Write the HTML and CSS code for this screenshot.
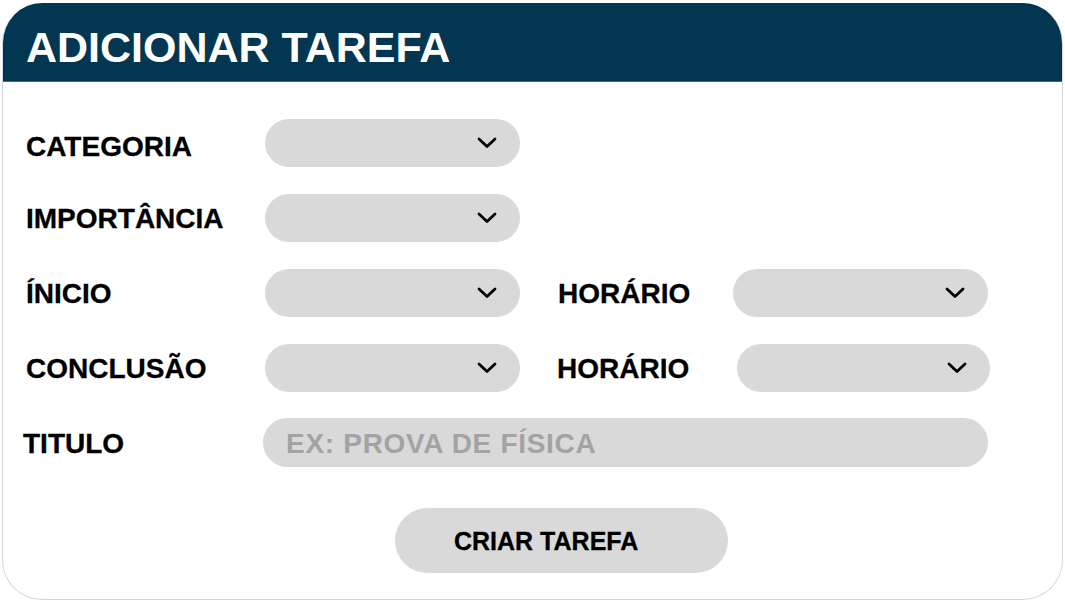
FILE: index.html
```html
<!DOCTYPE html>
<html lang="pt-BR">
<head>
<meta charset="utf-8">
<title>Adicionar Tarefa</title>
<link rel="stylesheet" href="styles.css">
</head>
<body>
<div class="card">
  <div class="header">ADICIONAR TAREFA</div>
  <form class="form">
    <div class="grid">
      <label class="label label-first">CATEGORIA</label>
      <div class="select"><svg class="chev" viewBox="0 0 20 12" width="20" height="12"><polyline points="2,2 10,9.5 18,2"/></svg></div>
      <span class="empty"></span>

      <label class="label">IMPORTÂNCIA</label>
      <div class="select"><svg class="chev" viewBox="0 0 20 12" width="20" height="12"><polyline points="2,2 10,9.5 18,2"/></svg></div>
      <span class="empty"></span>

      <label class="label">ÍNICIO</label>
      <div class="select"><svg class="chev" viewBox="0 0 20 12" width="20" height="12"><polyline points="2,2 10,9.5 18,2"/></svg></div>
      <label class="label label2">HORÁRIO</label>
      <div class="select"><svg class="chev" viewBox="0 0 20 12" width="20" height="12"><polyline points="2,2 10,9.5 18,2"/></svg></div>

      <label class="label">CONCLUSÃO</label>
      <div class="select"><svg class="chev" viewBox="0 0 20 12" width="20" height="12"><polyline points="2,2 10,9.5 18,2"/></svg></div>
      <label class="label label2 label2-shift">HORÁRIO</label>
      <div class="select select-shift"><svg class="chev" viewBox="0 0 20 12" width="20" height="12"><polyline points="2,2 10,9.5 18,2"/></svg></div>

      <label class="label label-titulo">TITULO</label>
      <input class="text-input" type="text" placeholder="EX: PROVA DE FÍSICA">
    </div>
    <button type="button" class="btn">CRIAR TAREFA</button>
  </form>
</div>
</body>
</html>
```

FILE: styles.css
```css
html, body {
  margin: 0;
  padding: 0;
  background: #ffffff;
}

body {
  font-family: "Liberation Sans", Arial, sans-serif;
  padding: 3px 2px 0 2px;
}

.card {
  width: 1061px;
  height: 597px;
  box-sizing: border-box;
  border: 1px solid #d6d6de;
  border-top: 0;
  border-radius: 40px;
  overflow: hidden;
  background: #ffffff;
}

.header {
  height: 79px;
  box-sizing: border-box;
  background: #033651;
  border-bottom: 1px solid #3d6a80;
  color: #ffffff;
  font-weight: bold;
  font-size: 43px;
  line-height: 48px;
  padding: 20px 0 0 23px;
}

.form {
  margin: 0;
  padding: 36px 0 0 23px;
}

.grid {
  display: grid;
  grid-template-columns: 239px 255px 213px 255px;
  grid-auto-rows: 49px;
  row-gap: 26px;
  align-items: center;
}

.empty {
  grid-column: span 2;
}

.label {
  font-weight: bold;
  font-size: 28px;
  color: #000000;
  white-space: nowrap;
  padding-top: 2px;
  -webkit-text-stroke: 0.3px #000000;
}

.label-first {
  padding-top: 8px;
}

.label2 {
  padding-left: 38px;
}

.label2-shift {
  padding-left: 37px;
}

.label-titulo {
  margin-left: -3px;
  padding-top: 3px;
}

.select {
  height: 48px;
  background: #d9d9d9;
  border-radius: 25px;
  display: flex;
  align-items: center;
  justify-content: flex-end;
  padding-right: 23px;
  box-sizing: border-box;
}

.select-shift {
  margin-left: 4px;
  margin-right: -2px;
}

.chev {
  display: block;
  fill: none;
  stroke: #000000;
  stroke-width: 2.8;
  stroke-linecap: round;
  stroke-linejoin: round;
}

.text-input {
  grid-column: 2 / 5;
  margin-left: -2px;
  height: 49px;
  box-sizing: border-box;
  border: 0;
  outline: none;
  background: #d9d9d9;
  border-radius: 25px;
  padding: 2px 0 0 23px;
  font-family: "Liberation Sans", Arial, sans-serif;
  font-weight: bold;
  font-size: 28px;
  letter-spacing: 0.7px;
  color: #a3a3a3;
}

.text-input::placeholder {
  color: #a3a3a3;
  opacity: 1;
}

.btn {
  display: block;
  margin: 41px 0 0 369px;
  width: 333px;
  height: 65px;
  border: 0;
  border-radius: 33px;
  background: #d9d9d9;
  text-align: left;
  padding: 2px 0 0 59px;
  font-family: "Liberation Sans", Arial, sans-serif;
  font-weight: bold;
  font-size: 25px;
  color: #000000;
  -webkit-text-stroke: 0.3px #000000;
}
```
